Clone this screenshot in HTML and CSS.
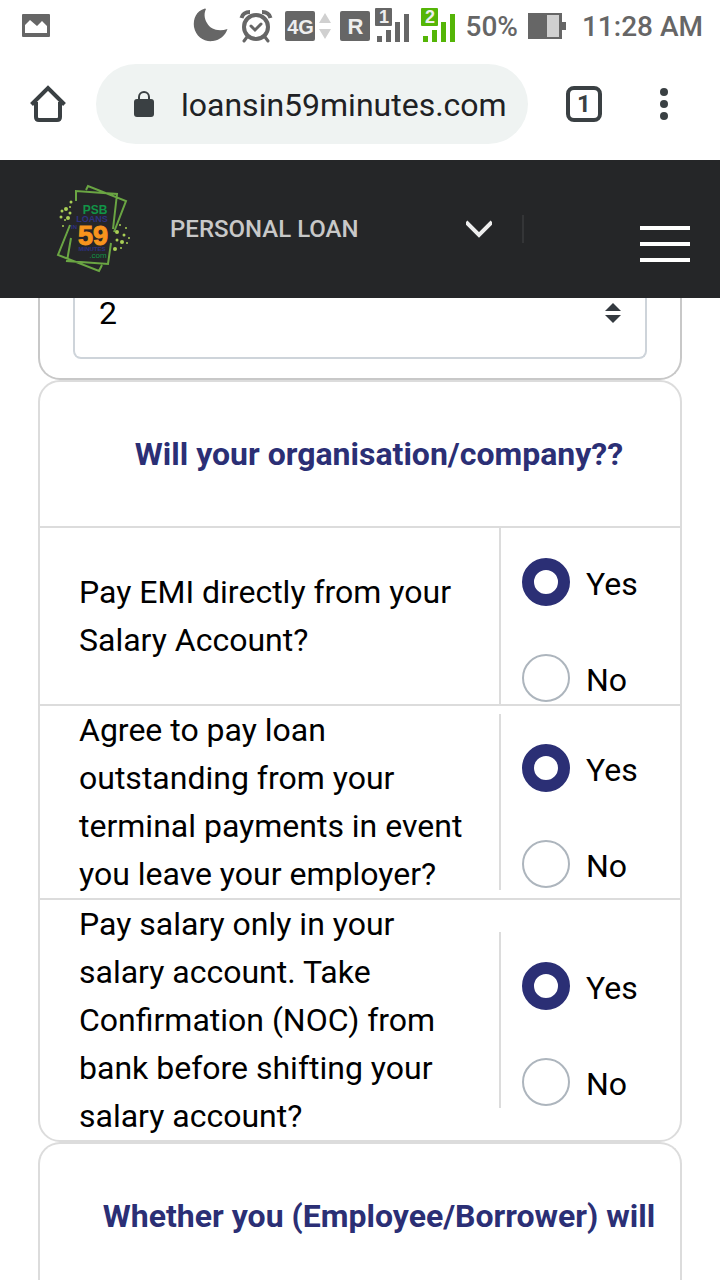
FILE: index.html
```html
<!DOCTYPE html>
<html lang="en">
<head>
<meta charset="utf-8">
<meta name="viewport" content="width=device-width, initial-scale=1">
<title>Personal Loan</title>
<link rel="stylesheet" href="styles.css">
</head>
<body>
<div class="status-bar">
  <svg class="photo" width="30" height="26" viewBox="0 0 30 26"><path fill="#666" fill-rule="evenodd" d="M2 0h26q1 0 1 1v21q0 1-1 1H2q-1 0-1-1V1q0-1 1-1zM4 19h22v-7l-5-5-5 5-7-6-5 5z"/></svg>
  <div class="indicators">
    <svg width="36" height="36" viewBox="0 0 36 36"><path fill="#666" d="M12 0.500C3 3 0 11 1 19c2 10 10 15 19 14 7-1 12-5 14.500-12C25 24 17 21 14 15c-3-5-3-10-1-14z"/></svg>
    <svg width="34" height="34" viewBox="0 0 34 34" fill="none" stroke="#666" stroke-linecap="round"><circle cx="17" cy="17" r="12" stroke-width="4"/><path stroke-width="3" d="M12 16l4 4 6-6M8 27l-3 4M26 27l3 4"/><path stroke-width="4" stroke-linecap="butt" d="M2.500 8Q4 2 11 2M31.500 8Q30 2 23 2"/></svg>
    <span class="badge badge-4g">4G</span>
    <svg class="arrows" width="14" height="28" viewBox="0 0 14 28"><path fill="#d0d0d0" d="M7 1l6 10H1zM7 27l6-10H1z"/></svg>
    <span class="badge badge-r">R</span>
    <svg width="36" height="36" viewBox="0 0 36 36"><path fill="#666" d="M1 0h15q1 0 1 1v16q0 1-1 1H1q-1 0-1-1V1q0-1 1-1zM2 28h5v6H2zM11 22h5v12h-5zM20 14h5v20h-5zM29 6h5v28h-5z"/><text class="sim" x="9" y="15" text-anchor="middle">1</text></svg>
    <svg class="sim-two" width="36" height="36" viewBox="0 0 36 36"><path fill="#55b507" d="M1 0h15q1 0 1 1v16q0 1-1 1H1q-1 0-1-1V1q0-1 1-1zM2 28h5v6H2zM11 22h5v12h-5zM20 14h5v20h-5zM29 6h5v28h-5z"/><text class="sim" x="9" y="15" text-anchor="middle">2</text></svg>
    <span class="percent">50%</span>
    <svg class="battery" width="40" height="28" viewBox="0 0 40 28"><path fill="#666" d="M1 0h34v9h4v8h-4v9H1z"/><path fill="#d0d0d0" d="M20 2h12v22H20z"/></svg>
    <time>11:28 AM</time>
  </div>
</div>

<div class="toolbar">
  <button class="icon-button" type="button" aria-label="Home"><svg width="36" height="38" viewBox="0 0 36 38" fill="none" stroke="#3a4043" stroke-width="4"><path d="M1.500 19.500L18 3l16.500 16.500M6 17v15q0 3 3 3h18q3 0 3-3V17"/></svg></button>
  <div class="address">
    <svg width="20" height="26" viewBox="0 0 20 26"><rect y="8" width="20" height="18" rx="3" fill="#3a4043"/><path d="M5 9V6a5 5 0 0 1 10 0v3" fill="none" stroke="#3a4043" stroke-width="2"/></svg>
    <span>loansin59minutes.com</span>
  </div>
  <button class="tabs" type="button" aria-label="1 open tab">1</button>
  <button class="icon-button more" type="button" aria-label="More"><svg width="8" height="32" viewBox="0 0 8 32" fill="#3a4043"><circle cx="4" cy="4" r="4"/><circle cx="4" cy="16" r="4"/><circle cx="4" cy="28" r="4"/></svg></button>
</div>

<header class="site-header">
  <svg class="logo" width="76" height="92" viewBox="0 0 76 92" role="img" aria-label="PSB Loans in 59 Minutes">
    <g fill="none" stroke="#6aa543" stroke-width="2"><path d="M20 18V8l41 3-4 35M55 60l-3 21-41-3 4-23M30 7l2-4 38 15-12 31M14 42L2 72l41 16 3-6"/></g>
    <g fill="#a9cf55"><circle cx="15" cy="19" r="1.500"/><circle cx="10" cy="26" r="2"/><circle cx="14" cy="24" r="1"/><circle cx="6" cy="28" r="1.500"/><circle cx="12" cy="35" r="2"/><circle cx="5" cy="34" r="1.500"/><circle cx="7" cy="43" r="1"/><circle cx="14" cy="30" r="1.500"/><circle cx="9" cy="37" r="1"/><circle cx="64" cy="42" r="1"/><circle cx="61" cy="49" r="2"/><circle cx="68" cy="52" r="1.500"/><circle cx="61" cy="57" r="1.500"/><circle cx="66" cy="59" r="2"/><circle cx="73" cy="55" r="1"/><circle cx="70" cy="45" r="1"/><circle cx="59" cy="66" r="2"/><circle cx="65" cy="65" r="1"/><circle cx="71" cy="60" r="1"/></g>
    <text class="logo-psb" x="39" y="31">PSB</text><text class="logo-loans" x="36" y="39">LOANS</text><text class="logo-small" x="18" y="46">IN</text><text class="logo-59" x="37" y="62">59</text><text class="logo-small" x="36" y="68">MINUTES</text><text class="logo-com" x="42" y="75">.com</text>
  </svg>
  <button class="product" type="button"><span>PERSONAL LOAN</span><svg width="26" height="18" viewBox="0 0 26 18"><path d="M0 2l13 13L26 2" fill="none" stroke="#eee" stroke-width="4"/></svg></button>
  <button class="menu" type="button" aria-label="Menu"><span></span><span></span><span></span></button>
</header>

<main class="form">
  <div class="card card-select">
    <div class="select-wrap">
      <select aria-label="Number"><option>2</option></select>
      <svg width="16" height="20" viewBox="0 0 16 20"><path fill="#343a40" d="M8 0l8 8H0zM8 20l8-8H0z"/></svg>
    </div>
  </div>

  <section class="card">
    <h2>Will your organisation/company??</h2>
    <fieldset class="question" aria-labelledby="q1">
      <p id="q1">Pay EMI directly from your Salary Account?</p>
      <div class="options"><label><input type="radio" name="emi" checked>Yes</label><label><input type="radio" name="emi">No</label></div>
    </fieldset>
    <fieldset class="question" aria-labelledby="q2">
      <p id="q2">Agree to pay loan outstanding from your terminal payments in event you leave your employer?</p>
      <div class="options"><label><input type="radio" name="terminal" checked>Yes</label><label><input type="radio" name="terminal">No</label></div>
    </fieldset>
    <fieldset class="question" aria-labelledby="q3">
      <p id="q3">Pay salary only in your salary account. Take Confirmation (NOC) from bank before shifting your salary account?</p>
      <div class="options"><label><input type="radio" name="salary" checked>Yes</label><label><input type="radio" name="salary">No</label></div>
    </fieldset>
  </section>

  <section class="card card-next">
    <h2>Whether you (Employee/Borrower) will</h2>
  </section>
</main>
</body>
</html>
```
FILE: styles.css
```css
* { box-sizing: border-box; }
html, body { height: 100%; }
body {
  margin: 0;
  display: flex;
  flex-direction: column;
  overflow: hidden;
  background: #fff;
  color: #000;
  font-family: Roboto, "Noto Sans", sans-serif;
  font-size: 32px;
  line-height: 48px;
}
button { padding: 0; border: 0; background: none; font: inherit; }
svg { display: block; flex: none; }

.status-bar {
  flex: none;
  height: 52px;
  padding: 2px 17px 0 21px;
  display: flex;
  align-items: center;
  justify-content: space-between;
  color: #666;
  font-size: 28px;
  font-weight: 500;
}
.indicators { display: flex; align-items: center; }
.indicators > svg:first-child { margin-right: 10px; }
.badge {
  height: 30px;
  margin-bottom: 3px;
  border-radius: 2px;
  background: #666;
  color: #eee;
  font-family: "Liberation Sans", sans-serif;
  font-size: 20px;
  font-weight: 700;
  line-height: 32px;
  text-align: center;
}
.badge-4g { width: 30px; margin-left: 12px; }
.badge-r { width: 30px; margin-left: 8px; font-size: 22px; }
.arrows { margin: 0 0 2px 3px; }
.badge-r + svg { margin-left: 5px; }
.indicators > svg:first-child, .badge-r + svg, .sim-two { margin-bottom: 2px; }
.sim { fill: #eee; font: 700 18px "Liberation Sans", sans-serif; }
.sim-two { margin-left: 10px; }
.percent { margin-left: 8px; }
.battery { margin: 0 15px 0 9px; }

.toolbar {
  flex: none;
  height: 108px;
  padding: 0 52px 4px 30px;
  display: flex;
  align-items: center;
}
.address {
  flex: 1;
  height: 80px;
  margin: 0 38px 0 30px;
  padding-left: 38px;
  display: flex;
  align-items: center;
  gap: 27px;
  border-radius: 40px;
  background: #eff3f2;
  color: #202124;
  line-height: 50px;
}
.address span { padding-top: 2px; }
.tabs {
  width: 36px;
  height: 36px;
  border: 4px solid #3a4043;
  border-radius: 8px;
  color: #3a4043;
  font-size: 24px;
  font-weight: 700;
  line-height: 28px;
}
.more { margin-left: 58px; }

.site-header {
  flex: none;
  height: 138px;
  padding: 0 30px 0 56px;
  display: flex;
  align-items: center;
  background: #252628;
}
.logo text { text-anchor: middle; font-family: "Liberation Sans", sans-serif; font-weight: 700; }
.logo .logo-psb { fill: #119447; font-size: 12px; }
.logo .logo-loans { fill: #2e3180; font-size: 9px; }
.logo .logo-small { fill: #2e3180; font-size: 6px; }
.logo .logo-59 { fill: #f7941d; stroke: #f7941d; font-size: 27px; }
.logo .logo-com { fill: #119447; font-size: 8px; font-weight: 400; }
.product {
  flex: 1;
  height: 28px;
  margin-left: 38px;
  padding-right: 30px;
  display: flex;
  align-items: center;
  justify-content: space-between;
  border-right: 2px solid #343537;
  color: #c8c8c8;
  font-size: 24px;
  font-weight: 500;
}
.menu {
  width: 50px;
  margin: 30px 0 0 116px;
  display: flex;
  flex-direction: column;
  gap: 12px;
}
.menu span { height: 4px; background: #fff; }

.form {
  flex: 1;
  min-height: 0;
  padding: 0 38px;
  display: flex;
  flex-direction: column;
}
.card { flex: none; border: 2px solid #dcdcdc; border-radius: 22px; }
.card-select {
  padding: 0 33px 19px;
  border-color: #c8c8c8;
  border-top: 0;
  border-radius: 0 0 22px 22px;
}
.select-wrap { position: relative; }
.select-wrap select {
  display: block;
  width: 100%;
  height: 61px;
  padding: 0 24px 29px;
  appearance: none;
  border: 2px solid #ced4da;
  border-top: 0;
  border-radius: 0 0 8px 8px;
  background: #fff;
  color: #000;
  font: inherit;
  line-height: 30px;
}
.select-wrap svg { position: absolute; top: 5px; right: 26px; pointer-events: none; }
h2 {
  margin: 0;
  padding: 48px 0 48px 38px;
  color: #2b2f75;
  font-size: 32px;
  font-weight: 700;
  line-height: 48px;
  text-align: center;
  white-space: nowrap;
}
.question {
  margin: 0;
  padding: 0;
  border: 0;
  border-top: 2px solid #dcdcdc;
  display: grid;
  grid-template-columns: 1fr 181px;
  align-items: center;
}
.question p { margin: 0; padding: 0 32px 0 39px; }
.options {
  padding: 30px 0 2px 21px;
  border-left: 2px solid #dcdcdc;
  display: flex;
  flex-direction: column;
  gap: 48px;
}
.options label { height: 48px; display: flex; align-items: flex-start; gap: 16px; line-height: 52px; }
.options input {
  flex: none;
  width: 48px;
  height: 48px;
  margin: 0;
  appearance: none;
  border: 2px solid #adb5bd;
  border-radius: 50%;
  background: #fff;
}
.options input:checked { border: 12px solid #2b2f75; }
.card-next { flex: 1; border-bottom: 0; border-radius: 22px 22px 0 0; }
```
